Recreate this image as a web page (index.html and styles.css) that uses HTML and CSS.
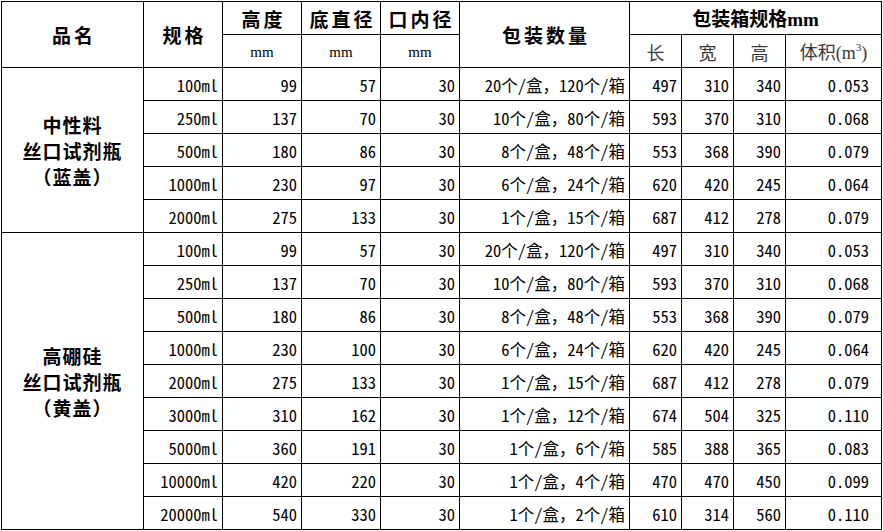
FILE: index.html
```html
<!DOCTYPE html>
<html lang="zh-CN">
<head>
<meta charset="utf-8">
<title>试剂瓶规格表</title>
<link rel="stylesheet" href="styles.css">
</head>
<body>
<table class="spec">
  <colgroup>
    <col class="c-name"><col class="c-size"><col class="c-dim"><col class="c-dim"><col class="c-dim">
    <col class="c-pack"><col class="c-box"><col class="c-box"><col class="c-box"><col class="c-vol">
  </colgroup>
  <thead>
    <tr>
      <th rowspan="2" class="h-main">品名</th>
      <th rowspan="2" class="h-main">规格</th>
      <th class="h-main">高度</th>
      <th class="h-main">底直径</th>
      <th class="h-main">口内径</th>
      <th rowspan="2" class="h-main">包装数量</th>
      <th colspan="4" class="h-box">包装箱规格<span class="mm-b">mm</span></th>
    </tr>
    <tr>
      <th class="h-unit">mm</th>
      <th class="h-unit">mm</th>
      <th class="h-unit">mm</th>
      <th class="h-sub">长</th>
      <th class="h-sub">宽</th>
      <th class="h-sub">高</th>
      <th class="h-sub">体积<span class="paren">(</span><span class="m">m</span><sup>3</sup><span class="paren">)</span></th>
    </tr>
  </thead>
  <tbody>
    <tr><th rowspan="5" class="group">中性料<br>丝口试剂瓶<br>（蓝盖）</th><td>100ml</td><td>99</td><td>57</td><td>30</td><td>20个/盒，120个/箱</td><td>497</td><td>310</td><td>340</td><td class="vol">0.053</td></tr>
    <tr><td>250ml</td><td>137</td><td>70</td><td>30</td><td>10个/盒，80个/箱</td><td>593</td><td>370</td><td>310</td><td class="vol">0.068</td></tr>
    <tr><td>500ml</td><td>180</td><td>86</td><td>30</td><td>8个/盒，48个/箱</td><td>553</td><td>368</td><td>390</td><td class="vol">0.079</td></tr>
    <tr><td>1000ml</td><td>230</td><td>97</td><td>30</td><td>6个/盒，24个/箱</td><td>620</td><td>420</td><td>245</td><td class="vol">0.064</td></tr>
    <tr><td>2000ml</td><td>275</td><td>133</td><td>30</td><td>1个/盒，15个/箱</td><td>687</td><td>412</td><td>278</td><td class="vol">0.079</td></tr>
    <tr><th rowspan="9" class="group">高硼硅<br>丝口试剂瓶<br>（黄盖）</th><td>100ml</td><td>99</td><td>57</td><td>30</td><td>20个/盒，120个/箱</td><td>497</td><td>310</td><td>340</td><td class="vol">0.053</td></tr>
    <tr><td>250ml</td><td>137</td><td>70</td><td>30</td><td>10个/盒，80个/箱</td><td>593</td><td>370</td><td>310</td><td class="vol">0.068</td></tr>
    <tr><td>500ml</td><td>180</td><td>86</td><td>30</td><td>8个/盒，48个/箱</td><td>553</td><td>368</td><td>390</td><td class="vol">0.079</td></tr>
    <tr><td>1000ml</td><td>230</td><td>100</td><td>30</td><td>6个/盒，24个/箱</td><td>620</td><td>420</td><td>245</td><td class="vol">0.064</td></tr>
    <tr><td>2000ml</td><td>275</td><td>133</td><td>30</td><td>1个/盒，15个/箱</td><td>687</td><td>412</td><td>278</td><td class="vol">0.079</td></tr>
    <tr><td>3000ml</td><td>310</td><td>162</td><td>30</td><td>1个/盒，12个/箱</td><td>674</td><td>504</td><td>325</td><td class="vol">0.110</td></tr>
    <tr><td>5000ml</td><td>360</td><td>191</td><td>30</td><td>1个/盒，6个/箱</td><td>585</td><td>388</td><td>365</td><td class="vol">0.083</td></tr>
    <tr><td>10000ml</td><td>420</td><td>220</td><td>30</td><td>1个/盒，4个/箱</td><td>470</td><td>470</td><td>450</td><td class="vol">0.099</td></tr>
    <tr><td>20000ml</td><td>540</td><td>330</td><td>30</td><td>1个/盒，2个/箱</td><td>610</td><td>314</td><td>560</td><td class="vol">0.110</td></tr>
  </tbody>
</table>
</body>
</html>
```
FILE: styles.css
```css
html, body {
  margin: 0;
  padding: 0;
  background: #fff;
}
body {
  padding: 1px 0 0 1px;
}
.spec {
  border-collapse: collapse;
  table-layout: fixed;
  width: 880px;
  color: #000;
  font-family: "Noto Sans Mono CJK SC", "Noto Sans CJK SC", "Liberation Mono", monospace;
  font-size: 16.5px;
}
.c-name { width: 142px; }
.c-size { width: 79px; }
.c-dim { width: 79px; }
.c-pack { width: 170px; }
.c-box { width: 52px; }
.c-vol { width: 96px; }

.spec tr {
  height: 33px;
}
.spec th, .spec td {
  border: 1px solid #000;
  padding: 0;
  white-space: nowrap;
  overflow: hidden;
  line-height: 1;
}
.spec td {
  text-align: right;
  padding: 3px 4px 0 0;
}
.spec td.vol {
  padding-right: 12px;
}
.spec th.h-main {
  font-family: "Noto Sans CJK SC", sans-serif;
  font-weight: 700;
  font-size: 19px;
  letter-spacing: 3px;
  text-indent: 3px;
}
.spec th.h-box {
  font-family: "Noto Sans CJK SC", sans-serif;
  font-weight: 700;
  font-size: 19px;
  padding-top: 1px;
}
.mm-b {
  font-family: "Liberation Serif", serif;
  font-weight: 700;
  font-size: 19px;
}
.spec th.h-unit {
  font-family: "Liberation Serif", serif;
  font-weight: 400;
  font-size: 15px;
  padding-top: 3px;
}
.spec th.h-sub {
  font-family: "Noto Sans CJK SC", sans-serif;
  font-weight: 400;
  font-size: 18px;
  color: #3a3a3a;
  padding-top: 2px;
}
.h-sub .m {
  font-family: "Liberation Serif", serif;
  font-size: 18px;
}
.h-sub .paren {
  font-family: "Liberation Serif", serif;
}
.h-sub sup {
  font-family: "Liberation Serif", serif;
  font-size: 11px;
  vertical-align: 8px;
  line-height: 0;
}
.spec th.group {
  font-family: "Noto Sans CJK SC", sans-serif;
  font-weight: 700;
  font-size: 19px;
  line-height: 26px;
  letter-spacing: 1px;
  padding-top: 2px;
}
```
